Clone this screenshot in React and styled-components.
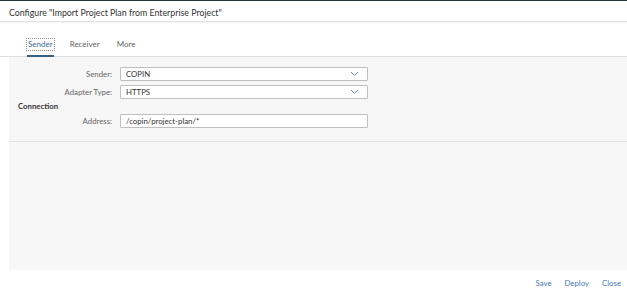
import React from 'react'
import styled, { createGlobalStyle } from 'styled-components'

const GlobalStyle = createGlobalStyle`
  html, body {
    margin: 0;
    padding: 0;
    background: #ffffff;
  }
  body {
    font-family: Lato, "Open Sans", "Liberation Sans", Arial, sans-serif;
    color: #333333;
  }
`

const Chevron = () => (
  <svg width="9" height="6" viewBox="0 0 9 6">
    <path d="M1 1 L4.5 4.5 L8 1" fill="none" stroke="#6b8fbf" strokeWidth="1" />
  </svg>
)

const fields = [
  { label: 'Sender:', value: 'COPIN', select: true },
  { label: 'Adapter Type:', value: 'HTTPS', select: true },
]

function App() {
  return (
    <Dialog>
      <GlobalStyle />
      <Header>
        <Title>Configure "Import Project Plan from Enterprise Project"</Title>
      </Header>

      <TabBar>
        <Tab active>
          <TabText active>Sender</TabText>
        </Tab>
        <Tab>
          <TabText>Receiver</TabText>
        </Tab>
        <Tab>
          <TabText>More</TabText>
        </Tab>
      </TabBar>

      <Content>
        <Form>
          {fields.map((f) => (
            <Row key={f.label}>
              <Label>{f.label}</Label>
              <Input>
                <span>{f.value}</span>
                {f.select && <Chevron />}
              </Input>
            </Row>
          ))}
          <Section>Connection</Section>
          <Row flush>
            <Label>Address:</Label>
            <Input>
              <span>/copin/project-plan/*</span>
            </Input>
          </Row>
        </Form>
        <Empty />
      </Content>

      <Footer>
        <FooterButton>Save</FooterButton>
        <FooterButton>Deploy</FooterButton>
        <FooterButton>Close</FooterButton>
      </Footer>
    </Dialog>
  )
}

export default App

const Dialog = styled.div`
  width: 627px;
  height: 301px;
  display: flex;
  flex-direction: column;
  border-top: 1px solid #2a323d;
  box-sizing: border-box;
  background: #fff;
  overflow: hidden;
`

const Header = styled.div`
  height: 21px;
  display: flex;
  align-items: center;
  padding: 2px 0 0 9px;
  box-sizing: border-box;
  border-bottom: 1px solid #e3e3e3;
  box-shadow: 0 1px 1px rgba(0, 0, 0, 0.04);
`

const Title = styled.div`
  font-size: 8.8px;
  color: #333;
  white-space: nowrap;
`

const TabBar = styled.div`
  height: 34px;
  display: flex;
  align-items: flex-end;
  gap: 15px;
  padding-left: 27px;
  border-bottom: 1px solid #dedede;
`

const Tab = styled.div`
  height: 100%;
  display: flex;
  align-items: center;
  padding-top: 10px;
  box-sizing: border-box;
  border-bottom: 2px solid ${(p) => (p.active ? '#346187' : 'transparent')};
  margin-bottom: -1px;
`

const TabText = styled.span`
  font-size: 8px;
  color: ${(p) => (p.active ? '#3a6a9e' : '#666')};
  padding: 0 1px;
  outline: ${(p) => (p.active ? '1px dotted #8a8a8a' : 'none')};
  line-height: 11px;
`

const Content = styled.div`
  margin-left: 9px;
  height: 213px;
  background: #f7f7f7;
  display: flex;
  flex-direction: column;
`

const Form = styled.div`
  display: flex;
  flex-direction: column;
  padding: 10px 0 13px;
  border-bottom: 1px solid #e2e2e2;
`

const Row = styled.div`
  display: grid;
  grid-template-columns: 103px 248px;
  column-gap: 8px;
  align-items: center;
  margin-top: ${(p) => (p.flush ? '0' : '4px')};
  &:first-child {
    margin-top: 0;
  }
`

const Label = styled.div`
  font-size: 7.8px;
  color: #666;
  text-align: right;
`

const Input = styled.div`
  height: 14px;
  box-sizing: border-box;
  background: #fff;
  border: 1px solid #bfbfbf;
  border-radius: 1px;
  display: flex;
  align-items: center;
  justify-content: space-between;
  padding: 0 8px 0 5px;
  font-size: 7.8px;
  color: #333;
`

const Section = styled.div`
  font-size: 7.8px;
  font-weight: bold;
  color: #333;
  padding-left: 9px;
  height: 15px;
  line-height: 15px;
`

const Empty = styled.div`
  flex: 1;
`

const Footer = styled.div`
  flex: 1;
  display: flex;
  justify-content: flex-end;
  align-items: center;
  gap: 13px;
  padding: 0 6px 5px 0;
`

const FooterButton = styled.span`
  font-size: 7.8px;
  color: #3f7cb8;
`
